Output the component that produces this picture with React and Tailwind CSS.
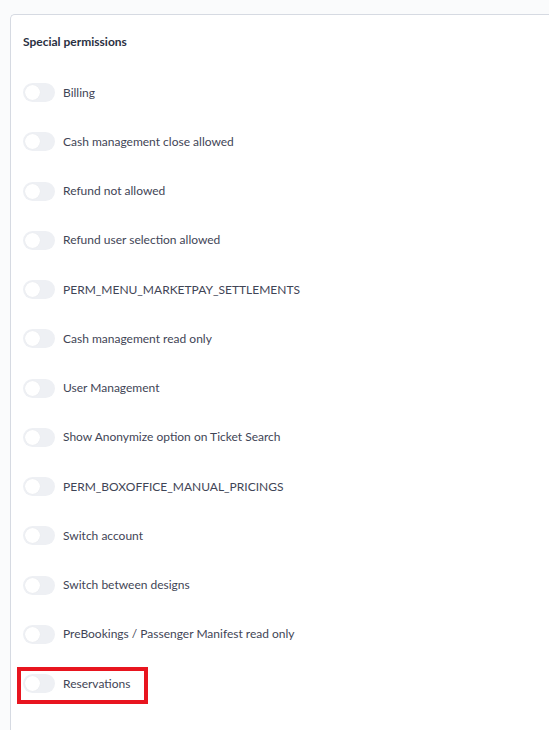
const perms = [
  "Billing",
  "Cash management close allowed",
  "Refund not allowed",
  "Refund user selection allowed",
  "PERM_MENU_MARKETPAY_SETTLEMENTS",
  "Cash management read only",
  "User Management",
  "Show Anonymize option on Ticket Search",
  "PERM_BOXOFFICE_MANUAL_PRICINGS",
  "Switch account",
  "Switch between designs",
  "PreBookings / Passenger Manifest read only",
  "Reservations",
]

function Toggle() {
  return (
    <span className="flex h-[19px] w-[32px] shrink-0 items-center rounded-full bg-[#eef0f4] px-[2px]">
      <span className="h-[15px] w-[15px] rounded-full bg-white shadow-[0_0_1px_rgba(0,0,0,0.08)]" />
    </span>
  )
}

function Row({ label, highlighted }) {
  return (
    <div className="relative flex h-[49.25px] items-center gap-[8px]">
      <Toggle />
      <span className="text-[12px] text-[#3f4556]">{label}</span>
      {highlighted ? (
        <span className="pointer-events-none absolute left-[-6px] top-[8px] h-[37px] w-[131px] border-[4px] border-[#e8151f]" />
      ) : null}
    </div>
  )
}

export default function App() {
  return (
    <div
      className="h-[730px] w-[549px] overflow-hidden bg-[#fafbfc] pl-[10px] pt-[14px]"
      style={{ fontFamily: "Lato, 'Open Sans', sans-serif" }}
    >
      <div className="h-[800px] w-[600px] rounded-tl-[5px] border-l border-t border-[#d6dae2] bg-white pl-[12px] pt-[20px]">
        <h2 className="text-[12px] font-bold leading-[14px] text-[#2a3042]">Special permissions</h2>
        <div className="mt-[19px]">
          {perms.map((p, i) => (
            <Row key={p} label={p} highlighted={i === perms.length - 1} />
          ))}
        </div>
      </div>
    </div>
  )
}
